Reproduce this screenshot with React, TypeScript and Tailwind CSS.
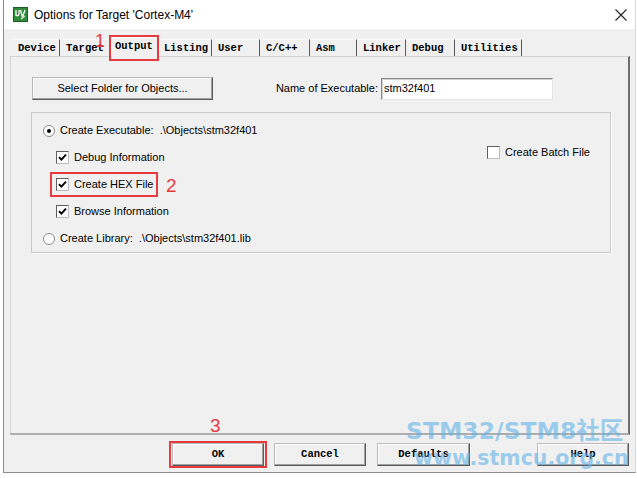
import React from "react";

const SANS = '"Liberation Sans", Arial, sans-serif';
const MONO = '"Liberation Mono", "Courier New", monospace';

function Check({ checked }: { checked: boolean }) {
  return (
    <span className="w-[13px] h-[13px] bg-white border border-t-[#5e5e5e] border-l-[#5e5e5e] border-r-[#bdbdbd] border-b-[#bdbdbd] flex items-center justify-center shrink-0">
      {checked && (
        <svg width="9" height="9" viewBox="0 0 9 9">
          <path d="M1 4.2 L3.4 6.7 L8 1.6" stroke="#000" strokeWidth="1.9" fill="none" />
        </svg>
      )}
    </span>
  );
}

function Radio({ checked }: { checked: boolean }) {
  return (
    <span className="w-[12px] h-[12px] rounded-full bg-white border border-[#8a8a8a] flex items-center justify-center shrink-0">
      {checked && <span className="w-[4px] h-[4px] rounded-full bg-black" />}
    </span>
  );
}

function Btn({ label, w, mono, className }: { label: string; w: string; mono?: boolean; className?: string }) {
  return (
    <div
      className={`${w} h-[23px] bg-[#f0f0f0] border border-t-[#b9b9b9] border-l-[#b9b9b9] border-r-[#5c5c5c] border-b-[#5c5c5c] shadow-[inset_-1px_-1px_0_#a0a0a0,inset_1px_1px_0_#ffffff] flex items-center justify-center text-black ${className ?? ""}`}
      style={{ fontFamily: mono ? MONO : SANS }}
    >
      <span className={mono ? "text-[10.5px] font-bold" : "text-[11px]"}>{label}</span>
    </div>
  );
}

const tabs: { name: string; w: string }[] = [
  { name: "Device", w: "w-[48px]" },
  { name: "Target", w: "w-[50px]" },
  { name: "Output", w: "w-[48px]" },
  { name: "Listing", w: "w-[54px]" },
  { name: "User", w: "w-[48px]" },
  { name: "C/C++", w: "w-[50px]" },
  { name: "Asm", w: "w-[47px]" },
  { name: "Linker", w: "w-[49px]" },
  { name: "Debug", w: "w-[49px]" },
  { name: "Utilities", w: "w-[67px]" },
];

export default function App() {
  return (
    <div className="w-[637px] h-[478px] bg-white relative overflow-hidden" style={{ fontFamily: SANS }}>
      <div className="ml-[3px] w-[633px] h-[473px] border-l border-r border-b border-l-[#8c8c8c] border-r-[#d8d8d8] border-b-[#8c8c8c] flex flex-col">
        {/* Title bar */}
        <div className="h-[29px] bg-white flex items-center pl-[9px] shrink-0">
          <svg width="15" height="15" viewBox="0 0 15 15" className="shrink-0">
            <rect x="0" y="0" width="15" height="15" fill="#2f8a3a" />
            <rect x="0.5" y="0.5" width="14" height="14" fill="none" stroke="#1d5e25" />
            <path d="M3 3 L3 9 M3 8 Q5 10 6 7 L6 3" stroke="#fff" strokeWidth="1.3" fill="none" />
            <path d="M7.5 3 L9.5 10 L12 3" stroke="#fff" strokeWidth="1.3" fill="none" />
            <path d="M8 12 L12 9" stroke="#cfe8cf" strokeWidth="1.2" />
          </svg>
          <span className="ml-[6px] text-[12px] text-black">Options for Target 'Cortex-M4'</span>
          <div className="flex-1" />
          <svg width="12" height="12" viewBox="0 0 12 12" className="mr-[8px]">
            <path d="M0.5 0.5 L11.5 11.5 M11.5 0.5 L0.5 11.5" stroke="#222" strokeWidth="1.1" />
          </svg>
        </div>

        {/* Body */}
        <div className="flex-1 bg-[#f0f0f0] pl-[6px] pr-[5px] pt-[8px] flex flex-col">
          {/* Tabs */}
          <div className="h-[19px] flex items-end ml-[2px] relative z-10" style={{ fontFamily: MONO }}>
            {tabs.map((t) =>
              t.name === "Output" ? (
                <div
                  key={t.name}
                  className={`${t.w} h-[20px] -mb-px relative bg-[#f0f0f0] border-t border-l border-t-white border-l-white border-r border-r-[#5a5a5a] pl-[4px] pt-[1px] text-[10.5px] font-bold text-black`}
                >
                  {t.name}
                  <div className="absolute left-[-2px] top-[-3px] w-[50px] h-[26px] border-2 border-[#e8393c]" />
                  <span
                    className="absolute left-[-16px] top-[-6px] text-[18px] leading-none text-[#e8393c] font-normal"
                    style={{ fontFamily: SANS }}
                  >
                    1
                  </span>
                </div>
              ) : (
                <div
                  key={t.name}
                  className={`${t.w} h-[17px] border-t border-t-[#fbfbfb] border-r border-r-[#5a5a5a] pl-[6px] pt-[2px] text-[10.5px] font-bold text-black leading-[12px]`}
                >
                  {t.name}
                </div>
              )
            )}
          </div>

          {/* Panel */}
          <div className="h-[379px] w-[620px] border-t border-l border-t-[#d4d4d4] border-l-[#d4d4d4] border-r-2 border-r-[#6e6e6e] border-b-2 border-b-[#adadad] pl-[21px] pt-[20px] shrink-0">
            <div className="flex items-center h-[23px]">
              <Btn label="Select Folder for Objects..." w="w-[181px]" />
              <div className="w-[168px] flex justify-end pr-[3px] text-[11px] text-black">Name of Executable:</div>
              <div className="w-[172px] h-[22px] bg-white border border-t-[#8a8a8a] border-l-[#8a8a8a] border-r-[#e3e3e3] border-b-[#e3e3e3] shadow-[inset_1px_1px_0_#d0d0d0] flex items-center pl-[2px] text-[11px] text-black">
                stm32f401
              </div>
            </div>

            {/* Group box */}
            <div className="mt-[12px] ml-[-1px] w-[580px] h-[141px] border border-[#c9c9c9] shadow-[1px_1px_0_#ffffff] flex text-[11px] text-black">
              <div className="w-[455px] pt-[4px] flex flex-col">
                <div className="h-[27px] flex items-center">
                  <span className="ml-[11px]"><Radio checked /></span>
                  <span className="ml-[5px] whitespace-pre">Create Executable:  .\Objects\stm32f401</span>
                </div>
                <div className="h-[27px] flex items-center">
                  <span className="ml-[24px]"><Check checked /></span>
                  <span className="ml-[5px]">Debug Information</span>
                </div>
                <div className="h-[27px] flex items-center relative">
                  <span className="ml-[24px]"><Check checked /></span>
                  <span className="ml-[5px]">Create HEX File</span>
                  <div className="absolute left-[18px] top-[1px] w-[108px] h-[25px] border-2 border-[#e8393c]" />
                  <span className="absolute left-[134px] top-[5px] text-[19px] leading-none text-[#e8393c]">2</span>
                </div>
                <div className="h-[27px] flex items-center">
                  <span className="ml-[24px]"><Check checked /></span>
                  <span className="ml-[5px]">Browse Information</span>
                </div>
                <div className="h-[27px] flex items-center">
                  <span className="ml-[11px]"><Radio checked={false} /></span>
                  <span className="ml-[5px] whitespace-pre">Create Library:  .\Objects\stm32f401.lib</span>
                </div>
              </div>
              <div className="pt-[33px]">
                <div className="h-[13px] flex items-center">
                  <Check checked={false} />
                  <span className="ml-[5px]">Create Batch File</span>
                </div>
              </div>
            </div>
          </div>

          {/* Bottom buttons */}
          <div className="mt-[8px] flex items-center h-[23px]">
            <div className="ml-[162px] relative">
              <Btn label="OK" w="w-[92px]" mono />
              <div className="absolute left-[-3px] top-[-2px] w-[98px] h-[27px] border-2 border-[#e8393c]" />
              <span className="absolute left-[38px] top-[-27px] text-[19px] leading-none text-[#e8393c]">3</span>
            </div>
            <Btn label="Cancel" w="w-[92px]" mono className="ml-[10px]" />
            <Btn label="Defaults" w="w-[93px]" mono className="ml-[11px]" />
            <Btn label="Help" w="w-[92px]" mono className="ml-[67px]" />
          </div>
        </div>
      </div>

      {/* Watermark */}
      <div className="absolute left-[406px] top-[416px] pointer-events-none" style={{ fontFamily: '"DejaVu Sans", "Noto Sans CJK SC", sans-serif' }}>
        <div className="text-[23.5px] font-bold leading-[27px] text-[#62b3e8]/60 whitespace-nowrap">
          STM32/STM8<span style={{ fontFamily: '"Noto Sans CJK SC", sans-serif' }}>社区</span>
        </div>
        <div className="ml-[8px] text-[20.5px] leading-[26px] text-[#62b3e8]/60 whitespace-nowrap font-bold">www.stmcu.org.cn</div>
      </div>
    </div>
  );
}
